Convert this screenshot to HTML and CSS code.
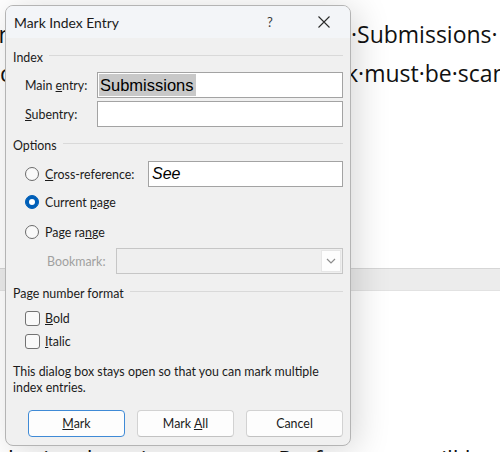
FILE: index.html
```html
<!DOCTYPE html>
<html>
<head>
<meta charset="utf-8">
<link rel="stylesheet" href="styles.css">
</head>
<body>
<div class="doc">
  <div class="page page1">
    <div class="line"><span class="seg seg-a">In·the·Index</span><span class="seg-r">·Submissions·</span></div>
    <div class="line"><span class="seg seg-b">cards·and·work</span><span class="seg-r">k·must·be·scanned</span></div>
  </div>
  <div class="page-gap"></div>
  <div class="page page2">
    <div class="line"><span class="seg-c">bmitted·on·time·scanner·Performance·will·be·timed</span></div>
  </div>
</div>

<div class="dialog">
  <div class="titlebar">
    <span class="title">Mark Index Entry</span>
    <span class="help">?</span>
    <span class="close">
      <svg width="12" height="12" viewBox="0 0 12 12"><path d="M0.5 0.5 L11.5 11.5 M11.5 0.5 L0.5 11.5" stroke="#2b2b2b" stroke-width="1.1" fill="none"/></svg>
    </span>
  </div>
  <div class="body">
    <div class="group g-index"><span>Index</span><span class="rule"></span></div>

    <div class="row field r-main">
      <span class="lbl">Main <u>e</u>ntry:</span>
      <div class="input"><span class="sel">Submissions</span></div>
    </div>
    <div class="row field r-sub">
      <span class="lbl"><u>S</u>ubentry:</span>
      <div class="input"></div>
    </div>

    <div class="group g-opt"><span>Options</span><span class="rule"></span></div>

    <div class="row r-xref">
      <span class="opt"><span class="radio"></span><span><u>C</u>ross-reference:</span></span>
      <div class="input"><span class="see">See</span></div>
    </div>
    <div class="row r-cur">
      <span class="radio on"></span><span>Current <u>p</u>age</span>
    </div>
    <div class="row r-range">
      <span class="radio"></span><span>Page ra<u>n</u>ge</span>
    </div>
    <div class="row r-book">
      <span class="lbl-book">Bookmark:</span>
      <div class="combo">
        <span class="drop">
          <svg width="10" height="6" viewBox="0 0 10 6"><path d="M1 1 L5 5 L9 1" stroke="#8c8c8c" stroke-width="1.2" fill="none"/></svg>
        </span>
      </div>
    </div>

    <div class="group g-fmt"><span>Page number format</span><span class="rule"></span></div>

    <div class="row r-bold">
      <span class="box"></span><span><u>B</u>old</span>
    </div>
    <div class="row r-italic">
      <span class="box"></span><span><u>I</u>talic</span>
    </div>

    <p class="note">This dialog box stays open so that you can mark multiple<br>index entries.</p>

    <div class="buttons">
      <button class="btn btn-default"><u>M</u>ark</button>
      <button class="btn">Mark <u>A</u>ll</button>
      <button class="btn">Cancel</button>
    </div>
  </div>
</div>
</body>
</html>
```

FILE: styles.css
```css
html, body {
  margin: 0;
  padding: 0;
}
body {
  width: 500px;
  height: 452px;
  overflow: hidden;
  position: relative;
  background: #ffffff;
}

/* background document */
.doc {
  width: 500px;
  height: 452px;
  overflow: hidden;
  font-family: "Open Sans", "Noto Sans", sans-serif;
  font-size: 23px;
  color: #111;
}
.page {
  background: #fff;
  box-sizing: border-box;
}
.page1 {
  height: 268px;
  padding-top: 15px;
}
.page-gap {
  height: 23px;
  box-sizing: border-box;
  background: #ececec;
  border-top: 1px solid #d6d6d6;
  border-bottom: 1px solid #e2e2e2;
}
.page2 {
  height: 161px;
  padding-top: 149px;
}
.line {
  display: flex;
  white-space: nowrap;
  height: 39px;
  line-height: 39px;
}
.seg {
  flex: none;
  overflow: hidden;
}
.seg-a {
  width: 359px;
  margin-left: -8px;
}
.seg-b {
  width: 346px;
}
.seg-c {
  padding-left: 8px;
}

/* dialog */
.dialog {
  position: absolute;
  left: 5px;
  top: 5px;
  width: 346px;
  height: 441px;
  box-sizing: border-box;
  border: 1px solid #b4b4b4;
  border-radius: 8px;
  background: #f0f0f0;
  box-shadow: 6px 4px 34px rgba(0, 0, 0, 0.16);
  overflow: hidden;
  font-family: Lato, "Noto Sans", sans-serif;
  font-size: 12.4px;
  color: #1b1b1b;
}
.titlebar {
  height: 32px;
  background: #f3f5f8;
  display: flex;
  align-items: center;
}
.title {
  flex: 1;
  padding-left: 8px;
  font-size: 13.9px;
  color: #1a1a1a;
}
.help {
  width: 40px;
  margin-right: 14px;
  text-align: center;
  font-size: 13px;
  color: #3a3a3a;
}
.close {
  width: 40px;
  margin-right: 6px;
  display: flex;
  justify-content: center;
  align-items: center;
}
.body {
  padding: 10px 7px 0;
  display: flex;
  flex-direction: column;
}
.group {
  height: 18px;
  display: flex;
  align-items: center;
  gap: 6px;
}
.rule {
  flex: 1;
  height: 1px;
  background: #d9d9d9;
  margin-bottom: 4px;
}
.g-opt { margin-top: 9px; }
.g-fmt { margin-top: 10px; }

.row {
  display: flex;
  align-items: center;
}
.field {
  height: 26px;
  padding-left: 12px;
}
.r-main { margin-top: 6px; }
.r-sub { margin-top: 3px; }
.lbl {
  width: 72px;
  flex: none;
}
.input {
  flex: 1;
  height: 26px;
  box-sizing: border-box;
  border: 1px solid #a3a3a3;
  background: #fff;
  display: flex;
  align-items: center;
  padding: 0 1px;
  font-family: "Liberation Sans", Arial, sans-serif;
  font-size: 16.5px;
  color: #000;
}
.sel {
  background: #c8c8c8;
  height: 22px;
  line-height: 22px;
  padding: 0 2px 0 1px;
}
.see {
  font-style: italic;
  padding-left: 2px;
  font-size: 16px;
}

.r-xref {
  height: 26px;
  margin-top: 7px;
  padding-left: 12px;
}
.opt {
  width: 123px;
  flex: none;
  display: flex;
  align-items: center;
}
.radio {
  width: 14px;
  height: 14px;
  box-sizing: border-box;
  border-radius: 50%;
  border: 1px solid #6b6b6b;
  background: #f9f9f9;
  flex: none;
  margin-right: 6px;
  display: flex;
  align-items: center;
  justify-content: center;
}
.radio.on {
  border-color: #005fb8;
  background: #005fb8;
}
.radio.on::after {
  content: "";
  width: 6px;
  height: 6px;
  border-radius: 50%;
  background: #fff;
}
.r-cur {
  height: 20px;
  margin-top: 5px;
  padding-left: 12px;
}
.r-range {
  height: 20px;
  margin-top: 10px;
  padding-left: 12px;
}
.r-book {
  height: 26px;
  margin-top: 6px;
  padding-left: 34px;
}
.lbl-book {
  width: 69px;
  flex: none;
  color: #a0a0a0;
}
.combo {
  flex: 1;
  height: 26px;
  box-sizing: border-box;
  border: 1px solid #c6c6c6;
  background: #efefef;
  display: flex;
  justify-content: flex-end;
  align-items: center;
  padding-right: 1px;
}
.drop {
  width: 20px;
  height: 22px;
  background: #fdfdfd;
  border: 1px solid #e6e6e6;
  box-sizing: border-box;
  display: flex;
  align-items: center;
  justify-content: center;
}

.r-bold {
  height: 20px;
  margin-top: 6px;
  padding-left: 12px;
}
.r-italic {
  height: 20px;
  margin-top: 3px;
  padding-left: 12px;
}
.box {
  width: 15px;
  height: 15px;
  box-sizing: border-box;
  border: 1px solid #727272;
  border-radius: 3px;
  background: #f9f9f9;
  margin-right: 5px;
  flex: none;
}

.note {
  margin: 13px 0 0;
  line-height: 16px;
  white-space: nowrap;
}
.buttons {
  margin-top: 14px;
  display: flex;
  justify-content: flex-end;
  gap: 12px;
}
.btn {
  width: 97px;
  height: 27px;
  box-sizing: border-box;
  border: 1px solid #d2d2d2;
  border-bottom-color: #c2c2c2;
  border-radius: 4px;
  background: #fdfdfd;
  font-family: Lato, "Noto Sans", sans-serif;
  font-size: 12.4px;
  color: #1b1b1b;
  padding: 0;
}
.btn-default {
  border: 1px solid #3f8ad6;
}
```
